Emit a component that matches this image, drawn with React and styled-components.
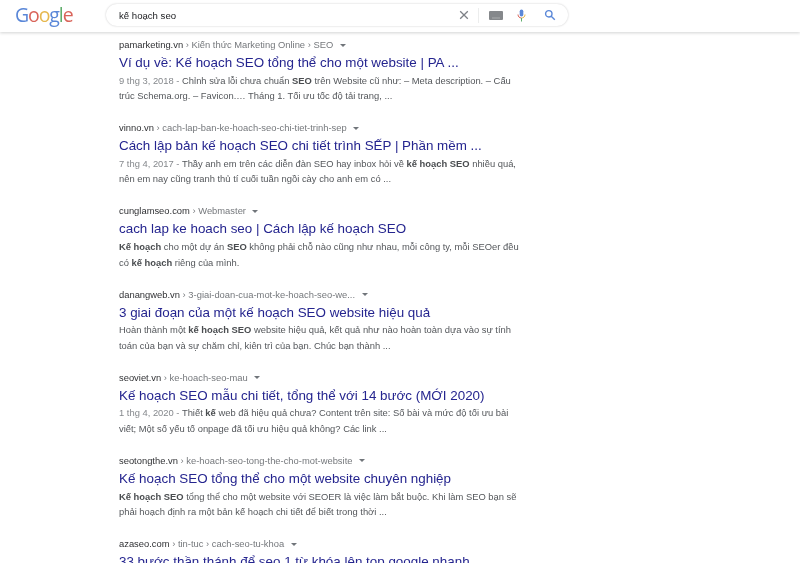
import React from "react";
import styled, { createGlobalStyle } from "styled-components";

const Global = createGlobalStyle`
  html, body { margin: 0; padding: 0; background: #fff; overflow: hidden; height: 563px; }
  #root { height: 563px; overflow: hidden; }
`;
const Page = styled.div`
  width: 800px; height: 563px; overflow: hidden;
  font-family: "Liberation Sans", Arial, sans-serif;
  filter: blur(0.45px);
`;
const Header = styled.header`
  height: 32px; display: flex; align-items: flex-start;
  box-shadow: 0 1px 3px rgba(32,33,36,.2);
  background: #fff; position: relative;
`;
const Logo = styled.div`
  width: 60px; margin: 3px 0 0 15px; font-size: 19.5px; line-height: 24px;
  font-family: "Open Sans", "Liberation Sans", sans-serif; letter-spacing: -1.1px;
  span:nth-child(1), span:nth-child(4) { color: #5a87d8; }
  span:nth-child(2), span:nth-child(6) { color: #d9645a; }
  span:nth-child(3) { color: #e6b84f; }
  span:nth-child(5) { color: #5fae6c; }
`;
const SearchBox = styled.div`
  width: 462px; height: 22px; margin: 4px 0 0 31px; padding: 0 12px 0 13px;
  border-radius: 12px; box-sizing: border-box;
  box-shadow: 0 0 2px rgba(32,33,36,.25);
  display: flex; align-items: center;
  font-size: 9.6px; color: #202124; font-weight: 400;
`;
const Query = styled.div` flex: 1; `;
const Icons = styled.div` display: flex; align-items: center; `;
const Sep = styled.div` width: 1px; height: 15px; background: #eceded; margin: 0 10px 0 8px; `;
const IconSlot = styled.div` display: flex; margin-left: ${p => p.$gap || 0}px; `;
const Results = styled.main`
  padding: 7px 0 0 119px; width: 405px;
  display: flex; flex-direction: column; gap: 16.3px;
`;
const Result = styled.article` height: 66.9px; `;
const Crumb = styled.div`
  font-size: 9.38px; line-height: 13px; color: #75787c; white-space: nowrap; display: flex; align-items: center;
  b { font-weight: 400; color: #303134; }
`;
const Arrow = styled.i`
  width: 0; height: 0; margin-left: 6.5px; margin-top: -1px;
  border-left: 3px solid transparent; border-right: 3px solid transparent; border-top: 3px solid #70757a;
`;
const Title = styled.h3`
  margin: 2px 0 0; font-size: 13.4px; line-height: 18px; font-weight: 400; color: #25258f; white-space: nowrap;
`;
const Snippet = styled.p`
  margin: 0.7px 0 0; font-size: 9.4px; line-height: 15.6px; color: #54575b; width: 420px;
  b { font-weight: 700; color: #4a4d50; }
  em { font-style: normal; color: #85888c; }
`;

const data = [
  { site: "pamarketing.vn", path: " › Kiến thức Marketing Online › SEO", title: "Ví dụ về: Kế hoạch SEO tổng thể cho một website | PA ...",
    text: <><em>9 thg 3, 2018 - </em>Chỉnh sửa lỗi chưa chuẩn <b>SEO</b> trên Website cũ như: – Meta description. – Cấu<br/>trúc Schema.org. – Favicon.… Tháng 1. Tối ưu tốc độ tải trang, ...</> },
  { site: "vinno.vn", path: " › cach-lap-ban-ke-hoach-seo-chi-tiet-trinh-sep", title: "Cách lập bản kế hoạch SEO chi tiết trình SẾP | Phần mềm ...",
    text: <><em>7 thg 4, 2017 - </em>Thầy anh em trên các diễn đàn SEO hay inbox hỏi về <b>kế hoạch SEO</b> nhiều quá,<br/>nên em nay cũng tranh thủ tí cuối tuần ngồi cày cho anh em có ...</> },
  { site: "cunglamseo.com", path: " › Webmaster", title: "cach lap ke hoach seo | Cách lập kế hoạch SEO",
    text: <><b>Kế hoạch</b> cho một dự án <b>SEO</b> không phải chỗ nào cũng như nhau, mỗi công ty, mỗi SEOer đều<br/>có <b>kế hoạch</b> riêng của mình.</> },
  { site: "danangweb.vn", path: " › 3-giai-doan-cua-mot-ke-hoach-seo-we...", title: "3 giai đoạn của một kế hoạch SEO website hiệu quả",
    text: <>Hoàn thành một <b>kế hoạch SEO</b> website hiệu quả, kết quả như nào hoàn toàn dựa vào sự tính<br/>toán của bạn và sự chăm chỉ, kiên trì của bạn. Chúc bạn thành ...</> },
  { site: "seoviet.vn", path: " › ke-hoach-seo-mau", title: "Kế hoạch SEO mẫu chi tiết, tổng thể với 14 bước (MỚI 2020)",
    text: <><em>1 thg 4, 2020 - </em>Thiết <b>kế</b> web đã hiệu quả chưa? Content trên site: Số bài và mức độ tối ưu bài<br/>viết; Một số yếu tố onpage đã tối ưu hiệu quả không? Các link ...</> },
  { site: "seotongthe.vn", path: " › ke-hoach-seo-tong-the-cho-mot-website", title: "Kế hoạch SEO tổng thể cho một website chuyên nghiệp",
    text: <><b>Kế hoạch SEO</b> tổng thể cho một website với SEOER là việc làm bắt buộc. Khi làm SEO bạn sẽ<br/>phải hoạch định ra một bản kế hoạch chi tiết để biết trong thời ...</> },
  { site: "azaseo.com", path: " › tin-tuc › cach-seo-tu-khoa", title: "33 bước thần thánh để seo 1 từ khóa lên top google nhanh", text: null },
];

const Close = () => (
  <svg width="12" height="12" viewBox="0 0 12 12"><path d="M2.2 2.2l7.6 7.6M9.8 2.2l-7.6 7.6" stroke="#7d8186" strokeWidth="1.3"/></svg>
);
const Keyboard = () => (
  <svg width="14" height="9" viewBox="0 0 14 9"><rect width="14" height="9" rx="1" fill="#85888b"/><rect x="3" y="6.5" width="8" height="1" fill="#a9abad"/></svg>
);
const Mic = () => (
  <svg width="9" height="13" viewBox="0 0 9 13">
    <rect x="2.7" y="0.5" width="3.6" height="7" rx="1.8" fill="#5a87d8"/>
    <path d="M1 5.5c0 2.2 1.5 3.5 3.5 3.5" stroke="#d9645a" strokeWidth="1" fill="none"/>
    <path d="M8 5.5c0 2.2-1.5 3.5-3.5 3.5" stroke="#e6b84f" strokeWidth="1" fill="none"/>
    <rect x="4" y="9" width="1" height="3.5" fill="#5fae6c"/>
  </svg>
);
const Search = () => (
  <svg width="12" height="12" viewBox="0 0 12 12" fill="none" stroke="#5a87d8" strokeWidth="1.4">
    <circle cx="4.8" cy="4.8" r="3.2"/><path d="M7.2 7.2l3.6 3.6"/>
  </svg>
);

export default function App() {
  return (
    <Page>
      <Global />
      <Header>
        <Logo><span>G</span><span>o</span><span>o</span><span>g</span><span>l</span><span>e</span></Logo>
        <SearchBox>
          <Query>kế hoạch seo</Query>
          <Icons>
            <IconSlot><Close /></IconSlot>
            <Sep />
            <IconSlot><Keyboard /></IconSlot>
            <IconSlot $gap={14}><Mic /></IconSlot>
            <IconSlot $gap={18}><Search /></IconSlot>
          </Icons>
        </SearchBox>
      </Header>
      <Results>
        {data.map(r => (
          <Result key={r.site}>
            <Crumb><span><b>{r.site}</b>{r.path}</span><Arrow /></Crumb>
            <Title>{r.title}</Title>
            {r.text && <Snippet>{r.text}</Snippet>}
          </Result>
        ))}
      </Results>
    </Page>
  );
}
